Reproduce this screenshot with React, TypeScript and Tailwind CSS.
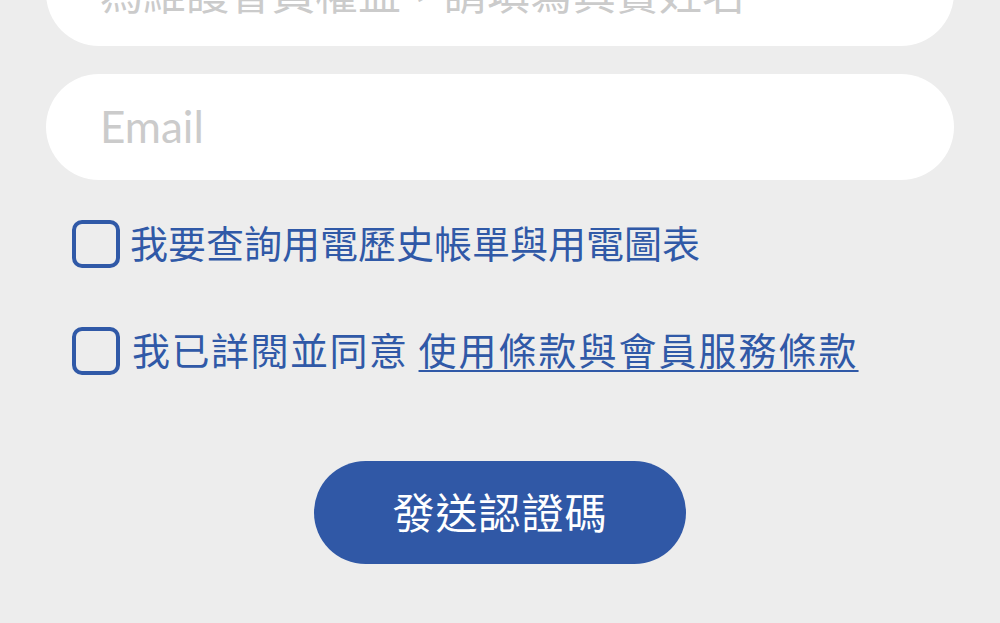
import React from "react";

const cjk = '"Noto Sans CJK TC", "Noto Sans", sans-serif';

function Box() {
  return (
    <div className="w-[48px] h-[48px] shrink-0 rounded-[10px] border-[4px] border-[#3059a7] bg-transparent" />
  );
}

export default function App() {
  return (
    <div
      className="w-[1000px] h-[623px] overflow-hidden bg-[#ededed] flex flex-col px-[46px]"
      style={{ fontFamily: cjk }}
    >
      <div className="mt-[-60px] h-[106px] shrink-0 rounded-full bg-white flex items-center pl-[54px] pb-[4px]">
        <span className="text-[43px] leading-none text-[#cbcbcb]" style={{ fontFamily: cjk }}>
          為維護會員權益，請填寫真實姓名
        </span>
      </div>
      <div className="mt-[28px] h-[106px] shrink-0 rounded-full bg-white flex items-center pl-[54px] pb-[2px]">
        <span className="text-[44px] leading-none text-[#cbcbcb]" style={{ fontFamily: '"Lato", "Noto Sans", sans-serif' }}>
          Email
        </span>
      </div>

      <div className="mt-[40px] ml-[26px] h-[48px] flex items-center gap-[10px]">
        <Box />
        <span className="text-[38px] leading-none text-[#3059a7] whitespace-nowrap pb-[4px]">
          我要查詢用電歷史帳單與用電圖表
        </span>
      </div>

      <div className="mt-[59px] ml-[26px] h-[48px] flex items-center gap-[12px]">
        <Box />
        <span className="text-[38px] leading-none text-[#3059a7] whitespace-nowrap tracking-[1.5px] pb-[4px]">
          我已詳閱並同意{" "}
          <span className="underline decoration-[2px] underline-offset-[5px] tracking-[2px]">
            使用條款與會員服務條款
          </span>
        </span>
      </div>

      <div className="mt-[86px] mx-auto w-[372px] h-[103px] shrink-0 rounded-full bg-[#3058a6] flex items-center justify-center pb-[4px]">
        <span className="text-[42px] leading-none text-white tracking-[1px]">發送認證碼</span>
      </div>
    </div>
  );
}
